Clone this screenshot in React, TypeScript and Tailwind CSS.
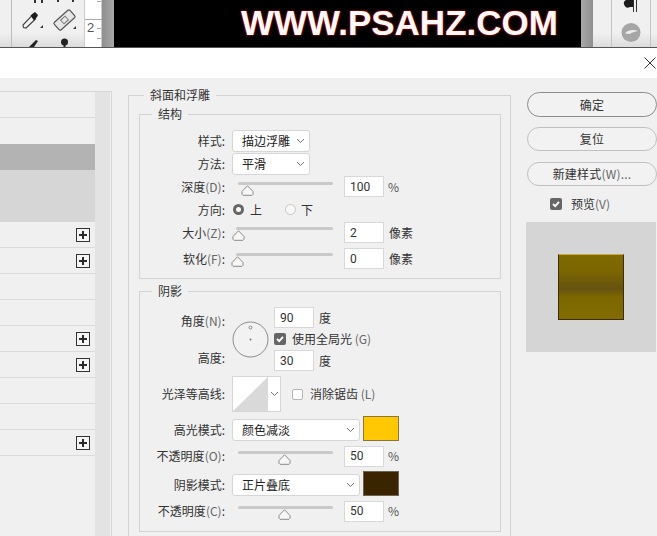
import type { ReactNode } from "react";

const LIST_ROWS = [false, false, false, true, true, false, false, true, true, false, false, true];

function Chevron() {
  return (
    <svg width="9" height="6" viewBox="0 0 9 6" className="shrink-0">
      <path d="M1 1l3.5 3.5L8 1" fill="none" stroke="#777" strokeWidth="1" />
    </svg>
  );
}

function Label({ children }: { children: ReactNode }) {
  return <div className="w-[86px] shrink-0 text-right pr-px whitespace-nowrap">{children}</div>;
}

function Latin({ children }: { children: ReactNode }) {
  return <span className="text-[#666]">{children}</span>;
}

function Select({ value, w, h = "h-[22px]" }: { value: string; w: string; h?: string }) {
  return (
    <div className={`${w} ${h} shrink-0 flex items-center justify-between bg-white border border-[#d6d6d6] rounded-[3px] pl-[9px] pr-[4px] text-[#222]`}>
      <span>{value}</span>
      <Chevron />
    </div>
  );
}

function NumberBox({ value }: { value: string }) {
  return (
    <div className="w-10 h-[21px] shrink-0 flex items-center bg-white border border-[#d8d8d8] pl-[5px] text-[#333] text-[12px] font-['Roboto',sans-serif]">
      {value}
    </div>
  );
}

// track runs to the right edge of a 101px box, thumb is a small outlined house shape
function Slider({ left, thumb, top }: { left: number; thumb: number; top: number }) {
  return (
    <div className="relative w-[101px] h-full shrink-0">
      <div className="absolute right-0 h-[3px] bg-[#c9c9c9] rounded-sm" style={{ left, top }} />
      <svg width="13" height="11" viewBox="0 0 13 11" className="absolute" style={{ left: thumb, top: top + 3 }}>
        <path d="M6.5 .8L12 6.5V9.3L11 10.300H2L1 9.300V6.500Z" fill="#f6f6f6" stroke="#8a8a8a" />
      </svg>
    </div>
  );
}

function CheckBox() {
  return (
    <div className="w-3 h-3 shrink-0 rounded-[2px] bg-[#666] flex items-center justify-center">
      <svg width="10" height="10" viewBox="0 0 10 10">
        <path d="M2 5l2.2 2.2L8 2.8" fill="none" stroke="#fff" strokeWidth="1.8" />
      </svg>
    </div>
  );
}

function EmptyBox() {
  return <div className="w-[11px] h-[11px] shrink-0 rounded-[2px] bg-white border border-[#b5b5b5]" />;
}

function PlusIcon() {
  return (
    <div className="w-[14px] h-[14px] border border-[#333] bg-[#f4f4f4] flex items-center justify-center">
      <svg width="10" height="10" viewBox="0 0 10 10">
        <path d="M5 1v8M1 5h8" stroke="#2b2b2b" strokeWidth="2" />
      </svg>
    </div>
  );
}

function Legend({ children, className }: { children: ReactNode; className: string }) {
  return <legend className={`${className} px-[6px] h-4 leading-4 text-[#333]`}>{children}</legend>;
}

function Toolbar() {
  return (
    <div className="h-12 flex border-b border-[#555] overflow-hidden">
      <div className="relative w-[85px] shrink-0 bg-gradient-to-b from-[#f0f0f0] from-70% to-[#dcdcdc] border-r border-[#ccc]">
        <div className="absolute left-[11px] top-0 bottom-0 w-px bg-[#bdbdbd]" />
        <svg width="85" height="47" viewBox="0 0 85 47" className="absolute left-0 top-0">
          {/* eyedropper */}
          <path d="M23.500 27.500l-.5-2.500 9-9.500 3.500 3.500-9.500 9z" fill="#f4f4f4" stroke="#444" strokeWidth="1.200" />
          <path d="M30.500 15.500l3-2.500 1.500-1 3 3-1 2-3 3.500z" fill="#1c1c1c" />
          <path d="M43 28h-3l3-3z" fill="#333" />
          {/* healing brush */}
          <g transform="rotate(-42 64.500 20)">
            <rect x="54" y="15" width="21" height="10" rx="1.500" fill="#e6e6e6" stroke="#555" strokeWidth="1.200" />
            <rect x="61.500" y="17.500" width="6" height="5" fill="none" stroke="#777" />
          </g>
          <path d="M76 29h-3l3-3z" fill="#333" />
          {/* brush and stamp tops */}
          <path d="M29 47l7-7 2 1-4 6z" fill="#222" />
          <circle cx="64.500" cy="42" r="3.500" fill="#222" />
          <rect x="63.500" y="44" width="2" height="3" fill="#222" />
          {/* tool corners cut off above */}
          <path d="M34 0h2v3h-2zM41 0h2v3h-2zM57 0h2v2h-2zM72 0h2v2h-2z" fill="#333" />
        </svg>
      </div>
      <div className="relative w-[17px] shrink-0 bg-white border-r border-[#ccc] text-[#555] text-[13px] leading-none font-['Liberation_Sans',sans-serif]">
        <svg width="17" height="47" viewBox="0 0 17 47" className="absolute left-0 top-0">
          <path d="M0 19.500h17M12 1.500h4M12 28.500h4M12 38.500h4" stroke="#aaa" />
        </svg>
        <span className="absolute left-[2px] top-[21px]">2</span>
      </div>
      <div className="w-3 shrink-0 bg-gradient-to-r from-[#8f8f8f] to-[#a8a8a8]" />
      <div className="w-[467px] shrink-0 bg-black flex items-center pl-[127px] pb-[3px]">
        <span className="text-[35px] leading-none font-bold text-[#fff8f8] whitespace-nowrap font-['Liberation_Sans',sans-serif] [text-shadow:0_0_2px_#c01010,0_0_3px_#801010]">
          WWW.PSAHZ.COM
        </span>
      </div>
      <div className="w-3 shrink-0 bg-gradient-to-r from-[#a8a8a8] to-[#8f8f8f]" />
      <div className="relative flex-1 bg-gradient-to-b from-[#f0f0f0] from-70% to-[#dcdcdc]">
        <div className="absolute left-[18px] top-0 bottom-0 w-px bg-[#c4c4c4]" />
        <div className="absolute left-[57px] top-0 bottom-0 w-px bg-[#c4c4c4]" />
        <svg width="65" height="47" viewBox="0 0 65 47" className="absolute left-0 top-0">
          {/* paragraph mark */}
          <path d="M33 0h7v7h-3a3.500 3.500 0 0 1-4-7z" fill="#1c1c1c" />
          <path d="M40.500 0v12M43.500 0v12" stroke="#333" />
          {/* rotate glyph */}
          <circle cx="38" cy="32.500" r="9.500" fill="#a6a6a6" />
          <path d="M32 33.500c3-4 9-4 13-2.500-3 1-6 1-8 3" fill="#ececec" />
        </svg>
      </div>
    </div>
  );
}

function StyleList() {
  return (
    <div className="relative w-[112px] shrink-0 mt-[13px] h-[445px] border-t border-r border-[#d6d6d6]">
      <div className="absolute left-[95px] top-0 bottom-0 w-[15px] bg-[#e3e3e3]" />
      <div className="w-[95px]">
        <div className="h-[26px] border-b border-[#dadada]" />
        <div className="h-[26px]" />
        <div className="h-[26px] bg-[#b3b3b3]" />
        <div className="h-[52px] bg-[#d6d6d6]" />
        {LIST_ROWS.slice(3).map((plus, i) => (
          <div key={i} className="h-[26px] flex items-center justify-end pr-[5px] border-b border-[#dadada]">
            {plus && <PlusIcon />}
          </div>
        ))}
      </div>
    </div>
  );
}

function Structure() {
  return (
    <fieldset className="ml-[10px] mr-[9px] mt-[3px] border border-[#d3d3d3] pt-[7px] pb-[8px]">
      <Legend className="ml-[12px]">结构</Legend>
      <div className="h-[23px] flex items-center">
        <Label>样式:</Label>
        <div className="ml-[6px]"><Select value="描边浮雕" w="w-[78px]" /></div>
      </div>
      <div className="h-[23px] flex items-center">
        <Label>方法:</Label>
        <div className="ml-[6px]"><Select value="平滑" w="w-[78px]" /></div>
      </div>
      <div className="h-[23px] flex items-center">
        <Label>深度<Latin>(D)</Latin>:</Label>
        <div className="ml-[6px] h-full flex items-center">
          <Slider left={6} thumb={9} top={7} />
          <div className="ml-[11px]"><NumberBox value="100" /></div>
          <span className="ml-[4px] text-[#555]">%</span>
        </div>
      </div>
      <div className="h-[23px] flex items-center">
        <Label>方向:</Label>
        <div className="ml-[7px] flex items-center">
          <div className="w-[11px] h-[11px] rounded-full border-[3px] border-[#666] bg-white" />
          <span className="ml-[6px]">上</span>
          <div className="ml-[23px] w-[11px] h-[11px] rounded-full border border-[#c6c6c6] bg-[#f8f8f8]" />
          <span className="ml-[5px]">下</span>
        </div>
      </div>
      <div className="h-[23px] flex items-center">
        <Label>大小<Latin>(Z)</Latin>:</Label>
        <div className="ml-[6px] h-full flex items-center">
          <Slider left={4} thumb={0} top={6} />
          <div className="ml-[11px]"><NumberBox value="2" /></div>
          <span className="ml-[5px]">像素</span>
        </div>
      </div>
      <div className="mt-[3px] h-[23px] flex items-center">
        <Label>软化<Latin>(F)</Latin>:</Label>
        <div className="ml-[6px] h-full flex items-center">
          <Slider left={4} thumb={-1} top={6} />
          <div className="ml-[11px]"><NumberBox value="0" /></div>
          <span className="ml-[5px]">像素</span>
        </div>
      </div>
    </fieldset>
  );
}

function Shading() {
  return (
    <fieldset className="ml-[10px] mr-[9px] mt-[4px] border border-[#d3d3d3] pt-[8px] pb-[10px]">
      <Legend className="ml-[12px]">阴影</Legend>
      <div className="h-[64px] flex">
        <div className="flex flex-col pt-[5px] gap-[19px]">
          <Label>角度<Latin>(N)</Latin>:</Label>
          <Label>高度:</Label>
        </div>
        <div className="ml-[6px] self-center">
          <svg width="37" height="37" viewBox="0 0 37 37">
            <circle cx="18.500" cy="18.500" r="17.500" fill="#f2f2f2" stroke="#8c8c8c" />
            <circle cx="18.500" cy="6.500" r="1.500" fill="none" stroke="#888" />
            <circle cx="18.500" cy="18.500" r="1" fill="#777" />
          </svg>
        </div>
        <div className="ml-[5px] flex flex-col justify-between">
          <div className="flex items-center">
            <NumberBox value="90" />
            <span className="ml-[5px]">度</span>
          </div>
          <div className="flex items-center">
            <CheckBox />
            <span className="ml-[6px] whitespace-nowrap">使用全局光 <Latin>(G)</Latin></span>
          </div>
          <div className="flex items-center">
            <NumberBox value="30" />
            <span className="ml-[5px]">度</span>
          </div>
        </div>
      </div>
      <div className="mt-[5px] h-[36px] flex items-center">
        <Label>光泽等高线:</Label>
        <div className="ml-[6px] w-[49px] h-[36px] flex bg-white border border-[#d6d6d6]">
          <div className="w-[35px] h-full border-r border-[#d6d6d6]">
            <svg width="35" height="34" viewBox="0 0 35 34">
              <path d="M0 34L35 0V34Z" fill="#d9d9d9" />
            </svg>
          </div>
          <div className="flex-1 flex items-center justify-center"><Chevron /></div>
        </div>
        <div className="ml-[11px]"><EmptyBox /></div>
        <span className="ml-[7px] whitespace-nowrap">消除锯齿 <Latin>(L)</Latin></span>
      </div>
      <div className="mt-[4px] h-[25px] flex items-end">
        <div className="h-[22px] flex items-center"><Label>高光模式:</Label></div>
        <div className="ml-[6px]"><Select value="颜色减淡" w="w-[128px]" /></div>
        <div className="ml-[3px] w-9 h-[25px] bg-[#ffc800] border border-[#8a7440]" />
      </div>
      <div className="mt-[5px] h-[20px] flex items-center">
        <Label>不透明度<Latin>(O)</Latin>:</Label>
        <div className="ml-[6px] h-full flex items-center">
          <Slider left={6} thumb={46} top={5} />
          <div className="ml-[11px]"><NumberBox value="50" /></div>
          <span className="ml-[4px] text-[#555]">%</span>
        </div>
      </div>
      <div className="mt-[5px] h-[25px] flex items-end">
        <div className="h-[22px] flex items-center"><Label>阴影模式:</Label></div>
        <div className="ml-[6px]"><Select value="正片叠底" w="w-[128px]" /></div>
        <div className="ml-[3px] w-9 h-[25px] bg-[#3a2500] border border-[#6f6352]" />
      </div>
      <div className="mt-[5px] h-[20px] flex items-center">
        <Label>不透明度<Latin>(C)</Latin>:</Label>
        <div className="ml-[6px] h-full flex items-center">
          <Slider left={6} thumb={46} top={5} />
          <div className="ml-[11px]"><NumberBox value="50" /></div>
          <span className="ml-[4px] text-[#555]">%</span>
        </div>
      </div>
    </fieldset>
  );
}

function SideButton({ children, dark, h = "h-[24px]" }: { children: ReactNode; dark?: boolean; h?: string }) {
  return (
    <div className={`${h} rounded-full flex items-center justify-center border bg-[#f2f2f2] text-[#333] tracking-[0.2px] ${dark ? "border-[#8c8c8c]" : "border-[#c0c0c0]"}`}>
      {children}
    </div>
  );
}

function SidePanel() {
  return (
    <div className="ml-[16px] flex-1 pt-[14px] flex flex-col">
      <SideButton dark h="h-[25px]">确定</SideButton>
      <div className="mt-[10px]"><SideButton>复位</SideButton></div>
      <div className="mt-[11px]"><SideButton>新建样式<Latin>(W)...</Latin></SideButton></div>
      <div className="mt-[12px] h-[12px] flex items-center pl-[23px]">
        <CheckBox />
        <span className="ml-[9px] whitespace-nowrap">预览<Latin>(V)</Latin></span>
      </div>
      <div className="mt-[12px] -ml-px mr-px h-[130px] bg-[#d5d5d5] flex justify-center pt-[32px]">
        <div className="w-[66px] h-[66px] border border-[#3f2e00] border-t-[#c9a93a] bg-[linear-gradient(to_bottom,#7f6900_0%,#7c6600_25%,#665310_52%,#7d6800_66%,#826c00_100%)]" />
      </div>
    </div>
  );
}

export default function App() {
  return (
    <div className="w-[657px] h-[536px] overflow-hidden bg-white text-[12px] text-[#333] font-['Noto_Sans_CJK_SC','Liberation_Sans',sans-serif]">
      <Toolbar />
      <div className="h-[30px] flex justify-end items-center pr-[1px] pb-[1px] bg-white">
        <svg width="12" height="12" viewBox="0 0 12 12">
          <path d="M.5.5l11 11M11.500.5l-11 11" stroke="#333" />
        </svg>
      </div>
      <div className="h-[458px] flex bg-[#f0f0f0]">
        <StyleList />
        <div className="ml-[16px] w-[383px] shrink-0 pt-[9px]">
          <fieldset className="border border-[#d3d3d3] h-[600px]">
            <Legend className="ml-[15px]">斜面和浮雕</Legend>
            <Structure />
            <Shading />
          </fieldset>
        </div>
        <SidePanel />
      </div>
    </div>
  );
}
